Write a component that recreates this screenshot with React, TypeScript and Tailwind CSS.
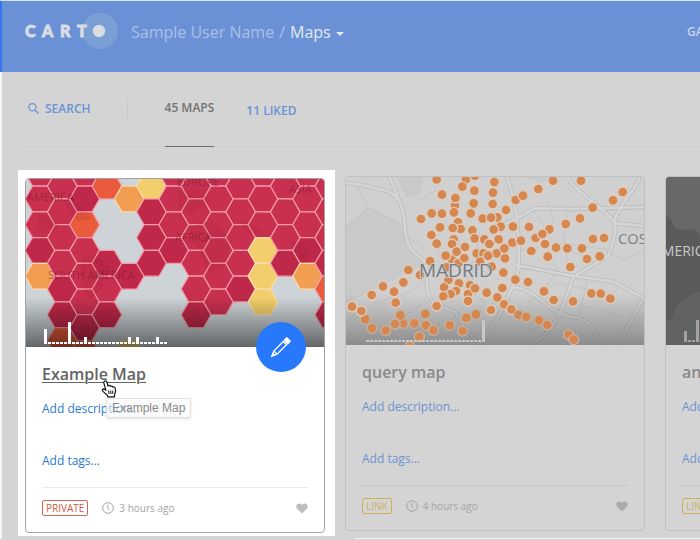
import type { ReactNode } from "react";

const RED = "#c9304f";
const CRIMSON = "#bf2848";
const VERMILION = "#e95b3a";
const ORANGE = "#f29e52";
const YELLOW = "#f2cf6c";

// One string per column, one letter per cell from the top row down.
const HEX_COLUMNS = [
  "rrrco",
  "rrrrccv",
  "rcvrrrcv",
  "v..crc.",
  ".o..c..y",
  "yccc",
  "rrrc",
  "rrrrrc",
  "rrrrrr",
  "rrrrc",
  "rrryyy",
  "rrrc",
  "rrrco",
  "rrrcvc",
];

const HEX_FILL: Record<string, string> = {
  r: RED,
  c: CRIMSON,
  v: VERMILION,
  o: ORANGE,
  y: YELLOW,
};

function hexPoints(cx: number, cy: number) {
  const r = 14.9;
  const h = 12.87;
  return [
    [cx - r, cy],
    [cx - r / 2, cy - h],
    [cx + r / 2, cy - h],
    [cx + r, cy],
    [cx + r / 2, cy + h],
    [cx - r / 2, cy + h],
  ]
    .map((p) => p.join(","))
    .join(" ");
}

function HexMap() {
  return (
    <svg viewBox="0 0 298 168" className="block h-[168px] w-full" preserveAspectRatio="xMidYMid slice" aria-hidden="true">
      <defs>
        <linearGradient id="hexShade" x1="0" y1="0" x2="0" y2="1">
          <stop offset="0" stopColor="#000" stopOpacity="0" />
          <stop offset="1" stopColor="#000" stopOpacity="0.52" />
        </linearGradient>
      </defs>
      <rect width="298" height="168" fill="#cdd3d6" />
      {HEX_COLUMNS.map((column, c) =>
        column.split("").map((cell, k) =>
          cell === "." ? null : (
            <polygon
              key={`${c}-${k}`}
              points={hexPoints(14 + c * 22.3, (c % 2 ? 7.1 : -5.8) + k * 25.74)}
              fill={HEX_FILL[cell]}
              stroke={cell === "o" || cell === "y" ? "#fbdcae" : "#f39bab"}
              strokeWidth="1.2"
            />
          ),
        ),
      )}
      <g fill="#8f1c36" opacity="0.13">
        <path d="M12 34l14 4 8 10-10 8-12-6zM38 22l20 6 8 12-14 2-10-10zM56 76l14 0 14 12-8 22-14 12-8-26zM152 12l20-2 12 12-18 14-14-8zM160 48l26-6 20 18-8 26-16 10-8-24zM212 40l18 8 10 8-20-2zM262 60l16 4 8 12-10 8z" />
      </g>
      <g fill="#7d1730" fillOpacity="0.55" fontFamily="'Open Sans', sans-serif" fontSize="11">
        <text x="1" y="22">AMERICA</text>
        <text x="22" y="100">SOUTH AMERICA</text>
        <text x="151" y="7">EUROPE</text>
        <text x="149" y="62">AFRICA</text>
        <text x="263" y="14">ASIA</text>
      </g>
      <rect y="118" width="298" height="50" fill="url(#hexShade)" />
    </svg>
  );
}

// Stops are plotted on a canvas three times the size of the preview.
const STOPS: [number, number][] = [
  [378, 28], [405, 17], [345, 107], [346, 84], [354, 157], [341, 208], [336, 222], [335, 268], [355, 280],
  [320, 292], [410, 250], [430, 250], [420, 275], [470, 250], [373, 264], [455, 290], [325, 330], [357, 340],
  [390, 345], [312, 352], [348, 363], [332, 372], [310, 379], [384, 372], [384, 393], [405, 355], [240, 315],
  [290, 28], [306, 74], [243, 147], [275, 130], [306, 131], [342, 127], [367, 50], [403, 62], [401, 100],
  [392, 130], [300, 172], [362, 177], [338, 174], [397, 181], [274, 195], [290, 221], [404, 205], [375, 231],
  [350, 245], [317, 257], [270, 273], [205, 300], [190, 337], [129, 349], [162, 365], [95, 375], [167, 398],
  [76, 448], [64, 423], [36, 410], [96, 475], [137, 482], [190, 460], [165, 462], [181, 436], [223, 460],
  [256, 432], [258, 466], [280, 481], [290, 408], [329, 466], [368, 483], [238, 500], [210, 530], [379, 444],
  [408, 433], [440, 368], [453, 420], [428, 146], [472, 142], [453, 143], [459, 68], [458, 102], [463, 36],
  [482, 170], [461, 178], [433, 208], [476, 208], [448, 222], [444, 257], [527, 90], [549, 77], [595, 57],
  [639, 32], [723, 32], [498, 120], [758, 113], [819, 91], [848, 66], [519, 170], [567, 171], [587, 204],
  [628, 178], [607, 192], [677, 162], [720, 145], [517, 218], [543, 212], [574, 243], [615, 222], [623, 260],
  [648, 233], [682, 235], [726, 235], [759, 207], [792, 204], [741, 267], [779, 259], [691, 291], [495, 265],
  [493, 235], [490, 308], [526, 329], [564, 336], [612, 364], [641, 390], [699, 394], [754, 370], [782, 371],
  [811, 386], [487, 354], [492, 403], [472, 382], [514, 418], [536, 435], [559, 441], [597, 451], [622, 465],
  [686, 494], [701, 509],
];

const ROADS =
  "M18 38L70 46L120 58Q160 64 172 88M148 20C165 60 190 110 193 150C195 215 205 240 255 275M258 280C265 350 250 385 300 408L345 425L385 490L420 524M18 462L60 428M480 170L540 140L585 115L700 117L912 111M500 20C530 100 540 200 535 300M680 20C720 80 790 110 820 152C830 165 830 190 805 258L700 320C670 400 660 480 570 524M525 285L700 318L820 335L912 385M515 350C600 360 620 430 690 440Q750 445 765 490L790 524M835 524L910 385M822 158C835 100 890 60 900 20M826 160L912 168M535 300C505 390 480 440 420 524";

const STREETS =
  "M50 45L85 112L190 165M85 112L40 160L18 165M190 195L260 235M200 60L240 90L290 60M100 400L200 370L255 330M120 524L190 440L250 400M300 490L380 400L450 330M260 180L330 320L440 400M290 300L460 260M300 230L480 330M350 180L390 360M420 180L390 380M540 240L670 220L810 240M690 100L670 200L690 320M600 180L650 300L600 380M560 400L650 340L810 370M580 120L650 230L740 260M740 330L720 440M700 400L850 440M620 80L640 160M810 250L850 270L912 240M570 480L700 430M850 330L800 400";

function StreetMap() {
  return (
    <svg viewBox="18 21 894 504" className="block h-[168px] w-full" preserveAspectRatio="xMidYMid slice" aria-hidden="true">
      <defs>
        <linearGradient id="streetShade" x1="0" y1="0" x2="0" y2="1">
          <stop offset="0" stopColor="#555" stopOpacity="0" />
          <stop offset="1" stopColor="#555" stopOpacity="0.55" />
        </linearGradient>
      </defs>
      <rect x="18" y="21" width="894" height="504" fill="#d0d0d0" />
      <path d="M18 165L85 112L190 165L200 230L250 285L160 330L90 365L18 400ZM170 21H250L240 70L200 85ZM550 21H660L600 40Z" fill="#c8c9c8" />
      <path d={STREETS} fill="none" stroke="#c3c4c5" strokeWidth="3" />
      <path d={ROADS} fill="none" stroke="#bcbdbe" strokeWidth="13" strokeLinejoin="round" />
      <path d={ROADS} fill="none" stroke="#d5d5d5" strokeWidth="8" strokeLinejoin="round" />
      <rect x="18" y="370" width="894" height="155" fill="url(#streetShade)" />
      {STOPS.map(([x, y]) => (
        <circle
          key={`${x}-${y}`}
          cx={x}
          cy={y}
          r="15"
          fill="#d5874f"
          stroke={y > 430 ? "#c4b2a3" : "#dfcdbe"}
          strokeWidth="4"
        />
      ))}
      <g fontFamily="'Open Sans', sans-serif" fill="#7c8084">
        <text x="237" y="320" fontSize="57" fontWeight="500" fill="#767a7e" stroke="#d0d0d0" strokeWidth="5" paintOrder="stroke">
          MADRID
        </text>
        <text x="834" y="222" fontSize="44">COSLADA</text>
      </g>
    </svg>
  );
}

function DarkMap() {
  return (
    <svg viewBox="0 0 298 168" className="block h-[168px] w-full" preserveAspectRatio="xMidYMid slice" aria-hidden="true">
      <rect width="298" height="168" fill="#67686a" />
      <path d="M0 38L5 42L8 50L16 53L28 52L36 60V114L26 118L16 124L10 132L8 140L0 146Z" fill="#5a5a5b" />
      <path d="M0 146L8 140L16 124L36 114V168H0Z" fill="#616263" />
      <text x="-13" y="79" fill="#c9c9c9" fontFamily="'Open Sans', sans-serif" fontSize="14">AMERICA</text>
    </svg>
  );
}

function Histogram({ bars, className }: { bars: number[]; className: string }) {
  return (
    <div className={`absolute bottom-[3px] flex items-end gap-px ${className}`} aria-hidden="true">
      {bars.map((height, i) => (
        <span key={i} className="w-[3px] bg-current" style={{ height }} />
      ))}
    </div>
  );
}

const HEX_BARS = Array.from({ length: 31 }, (_, i) => {
  if (i === 0) return 15;
  if (i === 6) return 22;
  return [10, 21, 23, 28].includes(i) ? 7 : 2;
});
const STREET_BARS = Array.from({ length: 30 }, (_, i) => (i === 29 ? 22 : 2));
const DARK_BARS = [11, 2, 2, 22, 2, 2, 7, 2];

type CardProps = {
  title: string;
  privacy: string;
  age: string;
  map: ReactNode;
  active?: boolean;
  children?: ReactNode;
};

function MapCard({ title, privacy, age, map, active = false, children }: CardProps) {
  const link = active ? "text-[#2b79d0]" : "text-[#6c93d0]";
  return (
    <article
      className={`relative w-[300px] shrink-0 rounded border ${active ? "border-[#a3a3a3] bg-white" : "border-[#c0c0c0]"}`}
    >
      <div className="relative overflow-hidden rounded-t-[3px]">{map}</div>
      <div className="px-4 pt-[15px]">
        <h2 className={`text-base leading-6 font-semibold ${active ? "text-[#636363]" : "text-[#8a8a8a]"}`}>
          <a href="#map" className={active ? "underline decoration-1 underline-offset-2" : ""}>{title}</a>
        </h2>
        <p className={`mt-[11px] text-xs leading-6 ${link}`}>
          <a href="#description">Add description...</a>
        </p>
        <p className={`mt-7 text-xs leading-6 ${link}`}>
          <a href="#tags">Add tags...</a>
        </p>
        <footer
          className={`mt-[14px] flex h-[45px] items-center border-t pb-1 text-[10px] ${active ? "border-[#ebebeb] text-[#a3a3a3]" : "border-[#c6c6c6] text-[#a5a5a5]"}`}
        >
          <span
            className={`rounded-xs border px-[3px] text-[10px] leading-[14px] ${active ? "border-[#d9654e] text-[#d05a44]" : "border-[#cfae55] text-[#cbb069]"} font-medium`}
          >
            {privacy}
          </span>
          <svg viewBox="0 0 12 12" className="mr-[5px] ml-[14px] size-3" fill="none" stroke="currentColor" aria-hidden="true">
            <circle cx="6" cy="6" r="5.3" />
            <path d="M5.7 2.7V6.3L7.6 8" />
          </svg>
          <span>{age}</span>
          <button type="button" aria-label={`Like ${title}`} className={`ml-auto ${active ? "text-[#bdbdbd]" : "text-[#ababab]"}`}>
            <svg viewBox="0 0 12 11" className="h-[11px] w-3" fill="currentColor" aria-hidden="true">
              <path d="M6 10.6L1.3 6C-.2 4.400 0 2.200 1.200 1.200C2.700 0 4.800.3 6 2C7.200.3 9.300 0 10.800 1.200C12 2.200 12.200 4.400 10.700 6Z" />
            </svg>
          </button>
        </footer>
      </div>
      {children}
    </article>
  );
}

function Logo() {
  return (
    <svg viewBox="0 0 94 36" className="h-9 w-[94px]" role="img" aria-label="Carto">
      <circle cx="75" cy="18" r="18" fill="#7a9fd5" />
      <circle cx="74" cy="18" r="6.200" fill="#dadde2" />
      <g
        fill="#d9dde4"
        stroke="#d9dde4"
        strokeWidth="0.900"
        fontFamily="Lato, sans-serif"
        fontWeight="900"
        fontSize="16"
      >
        <text x="0" y="24">C</text>
        <text x="17" y="24">A</text>
        <text x="35" y="24">R</text>
        <text x="52" y="24">T</text>
      </g>
    </svg>
  );
}

function HandCursor() {
  return (
    <svg viewBox="0 0 16 18" className="absolute top-[201px] left-[75px] h-[18px] w-4" aria-hidden="true">
      <path
        d="M3.500 1.200C4.500.5 5.600 1.200 5.900 2.200L7 6C7.800 5 9 5.400 9.300 6.300C10.200 5.700 11.300 6 11.700 7C12.800 6.500 13.900 7.100 14.200 8.200C14.800 10 14.900 12 13.800 14L13.400 16.800H6.800L6.300 15.200L2 11.400C1 10.200 1.200 9 2.400 8.900C3.200 8.900 4.200 9.700 4.900 10.300L2.800 2.900C2.600 2.200 2.800 1.500 3.500 1.200Z"
        fill="#fff"
        stroke="#111"
        strokeWidth="1.200"
        strokeLinejoin="round"
      />
      <path d="M7.500 10.500L8.100 14M9.700 10.500L10 14M11.800 10.500V14" stroke="#111" fill="none" />
    </svg>
  );
}

export default function App() {
  return (
    <div className="min-h-screen overflow-hidden border-t border-[#d3e6f3] bg-[#d4d4d4] font-['Open_Sans',sans-serif]">
      <header className="flex h-[71px] items-start border-l-2 border-[#3478f0] bg-[#6a91d5] pt-3 pl-[23px]">
        <a href="#home" className="shrink-0"><Logo /></a>
        <div className="ml-3 flex h-[38px] shrink-0 items-center text-base">
          <a href="#user" className="text-[#a9c0e6]">Sample User Name</a>
          <span className="mx-[5px] text-[#a9c0e6]">/</span>
          <button type="button" className="flex items-center gap-[5px] text-[#e3e9f3]">
            Maps
            <svg viewBox="0 0 8 4" className="mt-1 h-1 w-2" fill="currentColor" aria-hidden="true"><path d="M0 0H8L4 4Z" /></svg>
          </button>
        </div>
        <nav className="ml-auto flex h-[38px] w-[13px] shrink-0 items-center text-xs font-semibold whitespace-nowrap text-[#c4d3ec]">
          <a href="#gallery">GALLERY</a>
        </nav>
      </header>

      <main className="border-l-2 border-[#f4f4f4]">
        <div className="ml-[23px] flex h-[75px] items-stretch border-b border-[#cbcbcb] text-xs font-semibold text-[#6a93d6]">
          <button type="button" className="mb-px flex items-center gap-[6px] pl-[3px]">
            <svg viewBox="0 0 11 11" className="size-[11px]" fill="none" stroke="currentColor" strokeWidth="1.200" aria-hidden="true">
              <circle cx="4.300" cy="4.300" r="3.600" />
              <path d="M7 7L10.500 10.500" />
            </svg>
            SEARCH
          </button>
          <span className="mt-[27px] ml-9 h-5 w-px bg-[#c8c8c8]" />
          <a href="#maps" className="-mb-px ml-[37px] flex items-center border-b border-[#6b6f68] pb-[3px] text-[#737373]">45 MAPS</a>
          <a href="#liked" className="ml-8 flex items-center pt-[3px]">11 LIKED</a>
        </div>

        <div className="flex items-start pt-[23px] pl-4">
          <div className="shrink-0 bg-white pt-2 pr-[10px] pb-[3px] pl-[7px]">
            <MapCard
              active
              title="Example Map"
              privacy="PRIVATE"
              age="3 hours ago"
              map={<><HexMap /><Histogram bars={HEX_BARS} className="left-[18px] text-white" /></>}
            >
              <button
                type="button"
                aria-label="Edit map"
                className="absolute top-[143px] right-[18px] flex size-[50px] items-center justify-center rounded-full bg-[#2878fb] text-white"
              >
                <svg viewBox="0 0 20 20" className="size-5" fill="none" stroke="currentColor" strokeWidth="1.300" aria-hidden="true">
                  <path d="M1 19L2.800 14L12.300 4.500L15.500 7.700L6 17.200ZM2.800 14L6 17.200" />
                  <path d="M13.300 3.200L15.800 .8L19.200 4.200L16.800 6.700Z" fill="currentColor" />
                  <path d="M1 19L1.700 16.800L3.200 18.300Z" fill="currentColor" />
                </svg>
              </button>
              <div
                role="tooltip"
                className="absolute top-[219px] left-20 rounded-xs border border-[#e2e2e2] bg-[#f8f8f8]/60 px-[5px] font-['Liberation_Sans',sans-serif] text-xs leading-[18px] text-[#8a8a8a] shadow-sm"
              >
                Example Map
              </div>
              <HandCursor />
            </MapCard>
          </div>
          <div className="mt-[6px] ml-[10px] flex shrink-0 gap-5">
            <MapCard
              title="query map"
              privacy="LINK"
              age="4 hours ago"
              map={<><StreetMap /><Histogram bars={STREET_BARS} className="left-5 text-[#c8c8c8]" /></>}
            />
            <MapCard
              title="analysis map"
              privacy="LINK"
              age="5 hours ago"
              map={<><DarkMap /><Histogram bars={DARK_BARS} className="left-[18px] text-[#a3a3a3]" /></>}
            />
          </div>
        </div>
        <div className="mt-[2px] ml-[353px] h-px bg-[#f4f4f4]" />
      </main>
    </div>
  );
}
